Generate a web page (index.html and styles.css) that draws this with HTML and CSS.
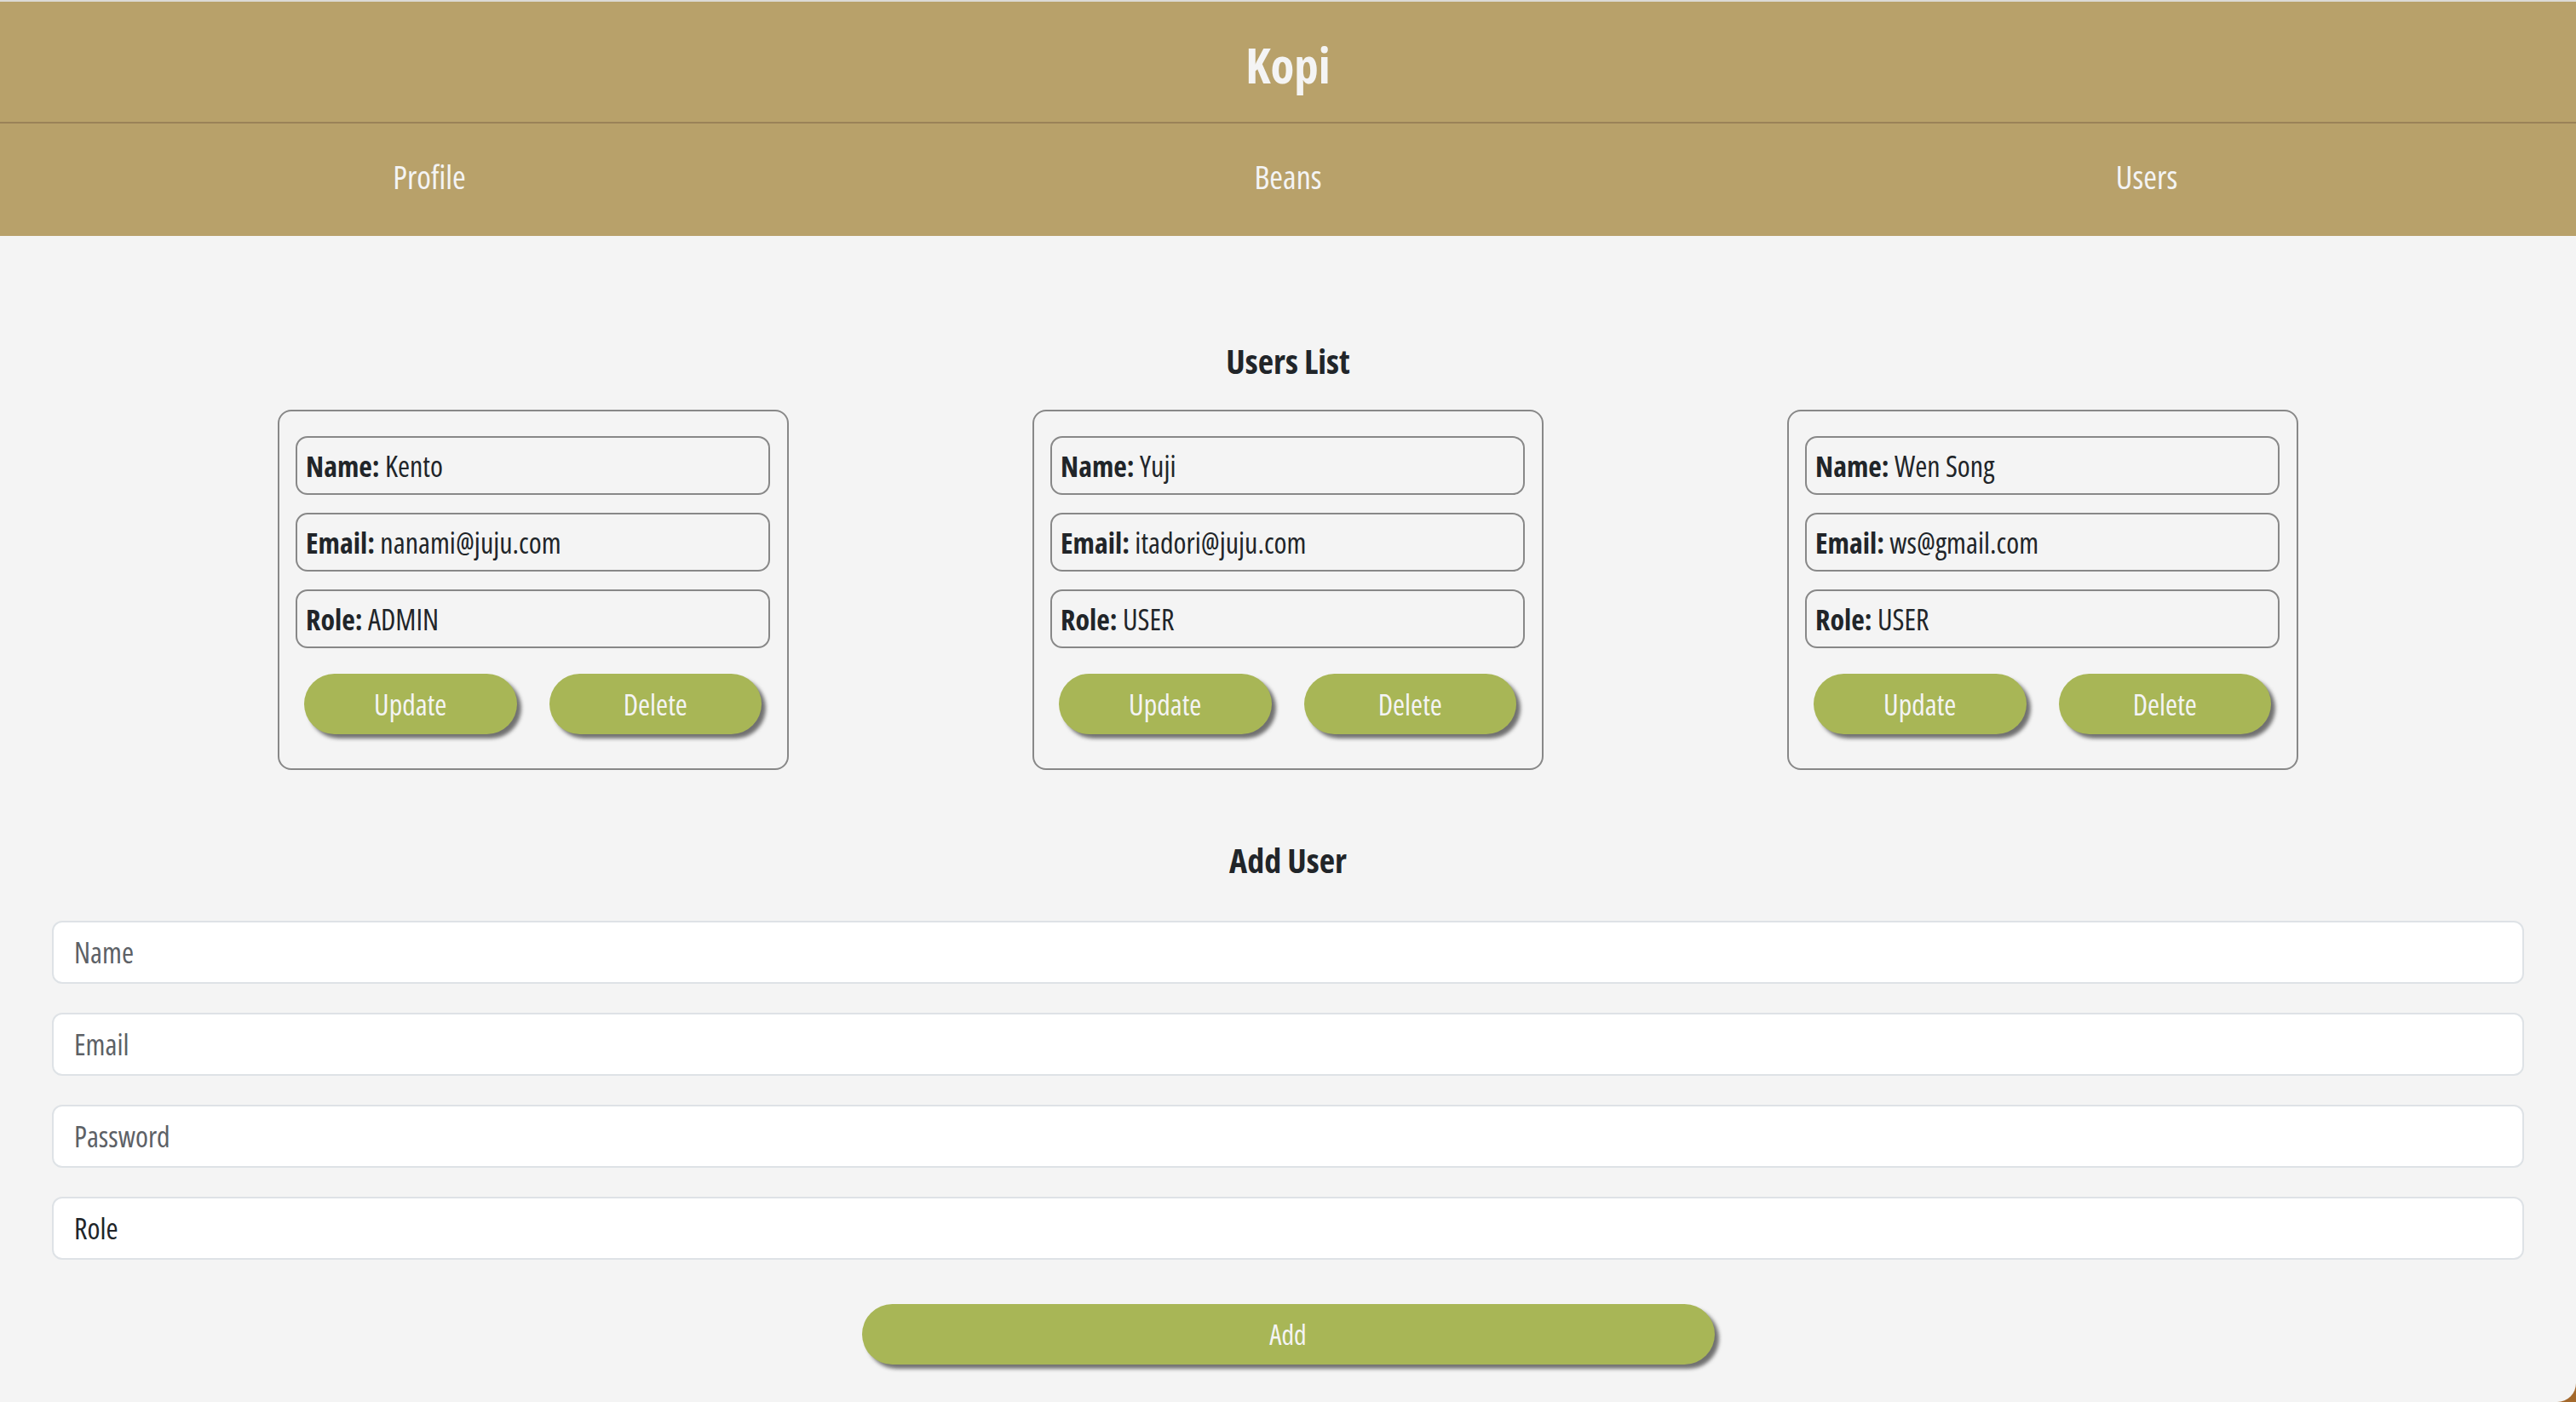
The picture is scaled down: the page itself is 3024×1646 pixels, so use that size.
FILE: index.html
```html
<!DOCTYPE html>
<html lang="en">
<head>
<meta charset="utf-8">
<title>Kopi</title>
<link rel="stylesheet" href="styles.css">
</head>
<body>
<div class="app">
  <header class="header">
    <h1 class="brand">Kopi</h1>
  </header>
  <nav class="nav">
    <a class="nav-link" href="#">Profile</a>
    <a class="nav-link" href="#">Beans</a>
    <a class="nav-link" href="#">Users</a>
  </nav>
  <main class="main">
    <h2 class="section-title users-title">Users List</h2>
    <div class="cards">
      <div class="card">
        <div class="field"><b>Name:</b> Kento</div>
        <div class="field"><b>Email:</b> nanami@juju.com</div>
        <div class="field"><b>Role:</b> ADMIN</div>
        <div class="actions">
          <button class="btn">Update</button>
          <button class="btn">Delete</button>
        </div>
      </div>
      <div class="card">
        <div class="field"><b>Name:</b> Yuji</div>
        <div class="field"><b>Email:</b> itadori@juju.com</div>
        <div class="field"><b>Role:</b> USER</div>
        <div class="actions">
          <button class="btn">Update</button>
          <button class="btn">Delete</button>
        </div>
      </div>
      <div class="card">
        <div class="field"><b>Name:</b> Wen Song</div>
        <div class="field"><b>Email:</b> ws@gmail.com</div>
        <div class="field"><b>Role:</b> USER</div>
        <div class="actions">
          <button class="btn">Update</button>
          <button class="btn">Delete</button>
        </div>
      </div>
    </div>
    <h2 class="section-title add-title">Add User</h2>
    <form class="form">
      <input class="input" type="text" placeholder="Name">
      <input class="input" type="email" placeholder="Email">
      <input class="input" type="password" placeholder="Password">
      <select class="input select"><option>Role</option></select>
      <button class="btn btn-add" type="button">Add</button>
    </form>
  </main>
</div>
</body>
</html>
```
FILE: styles.css
```css
html {
  background: #a4692c;
}
body {
  margin: 0;
  font-family: "Open Sans", "DejaVu Sans", sans-serif;
  font-stretch: 75%;
  color: #212529;
}
.app {
  background: #f4f4f4;
  min-height: 1646px;
  box-sizing: border-box;
  border-top: 2px solid #dcdad6;
  border-bottom-right-radius: 22px;
  overflow: hidden;
}
.header {
  background: #b8a16a;
  height: 143px;
  display: flex;
  align-items: center;
  justify-content: center;
  padding-top: 8px;
  box-sizing: border-box;
  border-bottom: 2px solid #9a8258;
}
.brand {
  margin: 0;
  font-size: 57px;
  font-weight: 700;
  line-height: 1;
  color: #f4f4f4;
}
.nav {
  background: #b8a16a;
  height: 132px;
  display: grid;
  grid-template-columns: 1fr 1fr 1fr;
  align-items: center;
  padding-bottom: 8px;
  box-sizing: border-box;
}
.nav-link {
  text-align: center;
  color: #f4f4f4;
  text-decoration: none;
  font-size: 38px;
  font-weight: 400;
  line-height: 48px;
}
.main {
  padding: 0 61px;
}
.section-title {
  margin: 0;
  text-align: center;
  font-size: 40px;
  font-stretch: 80%;
  line-height: 48px;
  font-weight: 700;
  color: #212529;
}
.users-title {
  margin-top: 123px;
}
.cards {
  display: flex;
  justify-content: center;
  gap: 286px;
  margin: 33px -61px 0;
}
.card {
  width: 600px;
  box-sizing: border-box;
  border: 2px solid #888888;
  border-radius: 16px;
  padding: 29px 20px 40px 19px;
  display: flex;
  flex-direction: column;
  gap: 21px;
}
.field {
  height: 69px;
  box-sizing: border-box;
  border: 2px solid #888888;
  border-radius: 14px;
  padding: 0 10px;
  display: flex;
  align-items: center;
  font-size: 34px;
  font-weight: 380;
  white-space: pre;
}
.field b {
  font-weight: 700;
}
.actions {
  display: flex;
  gap: 38px;
  padding: 0 10px;
  margin-top: 9px;
}
.btn {
  width: 250px;
  height: 71px;
  border: none;
  border-radius: 36px;
  background: #a8b656;
  color: #f4f4f4;
  font-family: inherit;
  font-stretch: 75%;
  font-size: 34px;
  font-weight: 400;
  box-shadow: 5px 5px 4px rgba(70, 70, 70, 0.75);
  padding: 0;
  cursor: pointer;
}
.add-title {
  margin-top: 82px;
}
.form {
  display: flex;
  flex-direction: column;
  gap: 34px;
  margin-top: 47px;
}
.input {
  height: 74px;
  box-sizing: border-box;
  width: 100%;
  border: 2px solid #dee2e6;
  border-radius: 12px;
  background: #ffffff;
  padding: 0 24px;
  font-family: inherit;
  font-stretch: 75%;
  font-size: 34px;
  font-weight: 380;
  color: #212529;
  outline: none;
}
.input::placeholder {
  color: #5d6166;
}
.select {
  appearance: none;
  -webkit-appearance: none;
}
.btn-add {
  align-self: center;
  width: 1001px;
  height: 71px;
  margin-top: 18px;
  font-size: 32px;
}
```
